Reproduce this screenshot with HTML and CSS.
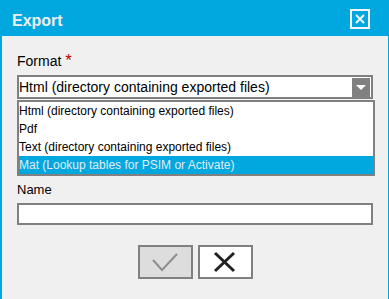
FILE: index.html
```html
<!DOCTYPE html>
<html lang="en">
<head>
<meta charset="utf-8">
<title>Export</title>
<link rel="stylesheet" href="styles.css">
</head>
<body>
<div class="dialog">
  <div class="titlebar">
    <span class="title">Export</span>
    <span class="close" aria-label="Close">
      <svg width="16" height="16" viewBox="0 0 16 16"><path d="M4 4 L12 12 M12 4 L4 12" stroke="#f4f4f4" stroke-width="2" fill="none"/></svg>
    </span>
  </div>
  <div class="content">
    <div class="label">Format <span class="req">*</span></div>
    <div class="select-wrap">
      <div class="select">
        <span class="select-text">Html (directory containing exported files)</span>
        <span class="arrow"><svg width="18" height="18" viewBox="0 0 18 18"><polygon points="4,7 14,7 9,12" fill="#ffffff"/></svg></span>
      </div>
      <ul class="options">
        <li class="option">Html (directory containing exported files)</li>
        <li class="option">Pdf</li>
        <li class="option">Text (directory containing exported files)</li>
        <li class="option selected">Mat (Lookup tables for PSIM or Activate)</li>
      </ul>
    </div>
    <div class="field-name">
      <div class="label label-name">Name</div>
      <div class="input"></div>
    </div>
    <div class="buttons">
      <div class="btn btn-ok">
        <svg width="51" height="30" viewBox="0 0 51 30"><polyline points="13,13 22,23 37,7" stroke="#8e8e8e" stroke-width="2" fill="none"/></svg>
      </div>
      <div class="btn btn-cancel">
        <svg width="51" height="30" viewBox="0 0 51 30"><path d="M15 6 L34 24 M34 6 L15 24" stroke="#222222" stroke-width="3" fill="none"/></svg>
      </div>
    </div>
  </div>
</div>
</body>
</html>
```
FILE: styles.css
```css
html, body {
  margin: 0;
  padding: 0;
  background: #f0f0f0;
}
.dialog {
  width: 389px;
  height: 299px;
  box-sizing: border-box;
  border-left: 2px solid #00a8df;
  border-right: 1px solid #00a8df;
  background: #f0f0f0;
  font-family: "Liberation Sans", Arial, sans-serif;
  font-size: 14px;
  color: #000;
}
.titlebar {
  height: 36px;
  background: #00a8df;
  display: flex;
  align-items: flex-start;
  justify-content: space-between;
  box-sizing: border-box;
}
.title {
  font-size: 16px;
  font-weight: bold;
  line-height: 18px;
  color: #f0f0f0;
  padding: 12px 0 0 10px;
}
.close {
  width: 20px;
  height: 20px;
  box-sizing: border-box;
  border: 2px solid #f4f4f4;
  margin: 9px 18px 0 0;
  display: flex;
}
.content {
  padding: 0 15px;
}
.label {
  line-height: 16px;
  height: 16px;
  margin-top: 17px;
}
.req {
  color: #c00000;
  font-size: 17px;
  line-height: 0;
}
.select-wrap {
  position: relative;
  margin-top: 6px;
}
.select {
  height: 24px;
  box-sizing: border-box;
  border: 2px solid #808080;
  background: #fff;
  display: flex;
  justify-content: space-between;
}
.select-text {
  line-height: 19px;
  padding-top: 1px;
  white-space: nowrap;
}
.arrow {
  width: 18px;
  height: 19px;
  margin: 1px 1px 0 0;
  background: #808080;
  display: flex;
}
.options {
  position: absolute;
  top: 25px;
  left: 0;
  width: 358px;
  box-sizing: border-box;
  margin: 0;
  padding: 0;
  list-style: none;
  border: 2px solid #808080;
  background: #fff;
  font-size: 12px;
}
.option {
  height: 18px;
  box-sizing: border-box;
  padding-top: 1px;
  line-height: 17px;
  white-space: nowrap;
}
.option.selected {
  background: #00a8df;
  color: #e4ecf2;
}
.field-name {
  margin-top: 83px;
}
.label-name {
  margin-top: 0;
  font-size: 13px;
}
.input {
  margin-top: 5px;
  height: 22px;
  box-sizing: border-box;
  border: 2px solid #808080;
  background: #fff;
}
.buttons {
  display: flex;
  justify-content: center;
  gap: 5px;
  margin-top: 20px;
}
.btn {
  width: 55px;
  height: 34px;
  box-sizing: border-box;
  border: 2px solid #808080;
  display: flex;
}
.btn-ok {
  background: #dddddd;
}
.btn-cancel {
  background: #ffffff;
}
```
